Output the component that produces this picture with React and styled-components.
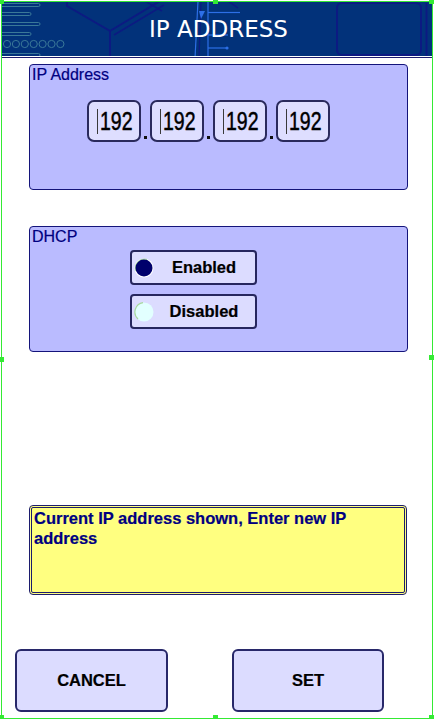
import React from "react";
import styled, { createGlobalStyle } from "styled-components";

const Global = createGlobalStyle`
  html, body { margin: 0; padding: 0; background: #ffffff; }
  body { font-family: "Liberation Sans", Arial, sans-serif; }
  * { box-sizing: border-box; }
`;

const Frame = styled.div`
  position: relative;
  margin: 1px 0 0 1px;
  width: 432px;
  height: 718px;
  border: 1px solid #34ea34;
  display: flex;
  flex-direction: column;
  background: #ffffff;
`;

const Handle = styled.span`
  position: absolute;
  width: 5px;
  height: 5px;
  background: #34ea34;
  left: ${(p) => p.$x};
  top: ${(p) => p.$y};
  z-index: 5;
`;

const Header = styled.header`
  position: relative;
  height: 55px;
  background: #02327a;
  border-bottom: 1px solid #ffffff;
  box-shadow: 0 1px 0 #1c1c6e;
  display: flex;
  align-items: center;
  justify-content: center;
  overflow: hidden;
`;

const HeaderArt = styled.svg`
  position: absolute;
  left: 0;
  top: 0;
  width: 430px;
  height: 54px;
`;

const Title = styled.h1`
  position: relative;
  margin: 0 0 1px 3px;
  font-family: "DejaVu Sans", Verdana, sans-serif;
  font-weight: normal;
  font-size: 23px;
  color: #ffffff;
`;

const Panel = styled.section`
  margin: ${(p) => p.$top}px 0 0 27px;
  width: 379px;
  height: 126px;
  border: 1px solid #14147a;
  border-radius: 4px;
  background: #babbff;
  padding: 1px 3px 0 2px;
  display: flex;
  flex-direction: column;
`;

const PanelLabel = styled.div`
  font-size: 16px;
  line-height: 17px;
  color: #000080;
  -webkit-text-stroke: 0.2px #000080;
`;

const IpRow = styled.div`
  display: flex;
  align-items: flex-end;
  margin: 17px 0 0 55px;
`;

const OctetBox = styled.div`
  width: 54px;
  height: 42px;
  border: 2px solid #2a2a5c;
  border-radius: 7px;
  background: #dedeff;
  display: flex;
  align-items: center;
  padding-left: 8px;
  overflow: visible;
`;

const Caret = styled.span`
  width: 1px;
  height: 25px;
  background: #3a3a3a;
  flex: none;
`;

const Digits = styled.span`
  display: inline-block;
  margin-left: 2px;
  font-size: 26px;
  line-height: 26px;
  color: #000000;
  -webkit-text-stroke: 0.5px #000000;
  transform: scaleX(0.75);
  transform-origin: left center;
  width: 32px;
  white-space: nowrap;
`;

const Sep = styled.div`
  width: 9px;
  height: 42px;
  display: flex;
  justify-content: center;
  align-items: flex-end;
  padding-bottom: 3px;
`;

const Dot = styled.span`
  width: 3px;
  height: 3px;
  background: #101010;
`;

const RadioList = styled.div`
  display: flex;
  flex-direction: column;
  gap: 9px;
  margin: 5px 0 0 98px;
`;

const RadioButton = styled.button`
  width: 127px;
  height: 35px;
  border: 2px solid #26265e;
  border-radius: 4px;
  background: #dcdcff;
  display: flex;
  align-items: center;
  padding: 0 0 0 1px;
  font-family: "Liberation Sans", Arial, sans-serif;
  cursor: pointer;
`;

const RadioLabel = styled.span`
  flex: 1;
  text-align: center;
  font-weight: bold;
  font-size: 16.5px;
  color: #000000;
  padding-right: 2px;
  -webkit-text-stroke: 0.2px #000000;
`;

const Message = styled.div`
  margin: 153px 0 0 27px;
  width: 378px;
  height: 90px;
  border: 3px double #1c1c6e;
  border-radius: 4px;
  background: #ffff80;
  padding: 0 4px 0 2px;
  color: #000080;
  font-weight: bold;
  font-size: 16.5px;
  line-height: 20px;
  -webkit-text-stroke: 0.2px #000080;
`;

const ActionRow = styled.div`
  display: flex;
  margin: 54px 0 0 13px;
  gap: 64px;
`;

const ActionButton = styled.button`
  width: ${(p) => p.$w}px;
  height: 63px;
  border: 2px solid #28286a;
  border-radius: 6px;
  background: #dcdcff;
  font-family: "Liberation Sans", Arial, sans-serif;
  font-weight: bold;
  font-size: 16.5px;
  color: #000000;
  -webkit-text-stroke: 0.2px #000000;
  cursor: pointer;
  padding: 0;
`;

function RadioDot({ on }) {
  return (
    <svg width="22" height="22" viewBox="0 0 22 22" style={{ flex: "none" }}>
      {on ? (
        <>
          <circle cx="11" cy="11" r="9.5" fill="#ffffff" />
          <path d="M3 14 A9 9 0 0 1 14 2.5" fill="none" stroke="#a8d8a0" strokeWidth="1.2" />
          <circle cx="11" cy="11" r="8.5" fill="#00006c" />
        </>
      ) : (
        <>
          <circle cx="11" cy="11" r="9.5" fill="#e2ffff" />
          <path d="M5 18 A9.5 9.5 0 0 1 10 1.6" fill="none" stroke="#a8d8a0" strokeWidth="1.2" />
        </>
      )}
    </svg>
  );
}

function Art() {
  const teal = "#3a7898";
  const navy = "#0c1a82";
  const blue = "#2d6fe6";
  const bars = [
    [1, 38],
    [10, 29],
    [20, 38],
    [30, 29],
    [51, 38],
  ];
  return (
    <HeaderArt viewBox="0 0 430 54">
      {bars.map(([y, w], i) => (
        <rect key={i} x="-4" y={y + 0.5} width={w + 4} height="3" rx="1.5" fill="none" stroke={teal} strokeWidth="1" />
      ))}
      {[0, 1, 2, 3, 4, 5, 6].map((i) => (
        <circle key={i} cx={5 + i * 8.9} cy="42" r="3.6" fill="none" stroke={teal} strokeWidth="1" />
      ))}
      <polyline points="65,-1 65,4 108,29 108,56" fill="none" stroke={navy} strokeWidth="2" />
      <line x1="108" y1="29" x2="158" y2="-1" stroke={navy} strokeWidth="2" />
      <line x1="112" y1="33" x2="162" y2="3" stroke={navy} strokeWidth="1.5" />
      <line x1="143" y1="-1" x2="160" y2="9" stroke={navy} strokeWidth="1.5" />
      <line x1="226" y1="-1" x2="236" y2="6" stroke={navy} strokeWidth="1.5" />
      <line x1="196" y1="-1" x2="193" y2="56" stroke={blue} strokeWidth="1.2" />
      <line x1="199" y1="-1" x2="197" y2="56" stroke={navy} strokeWidth="1.2" />
      <polygon points="197,9 203,9 199,17" fill={blue} />
      <line x1="206" y1="-1" x2="206" y2="56" stroke={blue} strokeWidth="1.2" />
      <line x1="206" y1="10.5" x2="238" y2="10.5" stroke={blue} strokeWidth="1.2" />
      <line x1="206" y1="33" x2="226" y2="33" stroke={blue} strokeWidth="1.2" />
      <line x1="206" y1="46" x2="224" y2="46" stroke={blue} strokeWidth="1.2" />
      <circle cx="225" cy="46" r="1.6" fill={blue} />
      <rect x="335" y="1" width="84" height="52" rx="5" fill="none" stroke={navy} strokeWidth="2" />
      <line x1="424.5" y1="1" x2="424.5" y2="56" stroke={navy} strokeWidth="2" />
    </HeaderArt>
  );
}

function Octet({ value }) {
  return (
    <OctetBox>
      <Caret />
      <Digits>{value}</Digits>
    </OctetBox>
  );
}

export default function App() {
  const octets = ["192", "192", "192", "192"];
  return (
    <>
      <Global />
      <Frame>
        <Handle $x="-3px" $y="-3px" />
        <Handle $x="211px" $y="-3px" />
        <Handle $x="427px" $y="-3px" />
        <Handle $x="-3px" $y="355px" />
        <Handle $x="427px" $y="353px" />
        <Handle $x="-3px" $y="713px" />
        <Handle $x="211px" $y="713px" />
        <Handle $x="427px" $y="713px" />
        <Header>
          <Art />
          <Title>IP ADDRESS</Title>
        </Header>
        <Panel $top={7}>
          <PanelLabel>IP Address</PanelLabel>
          <IpRow>
            {octets.map((o, i) => (
              <React.Fragment key={i}>
                {i > 0 && (
                  <Sep>
                    <Dot />
                  </Sep>
                )}
                <Octet value={o} />
              </React.Fragment>
            ))}
          </IpRow>
        </Panel>
        <Panel $top={36}>
          <PanelLabel>DHCP</PanelLabel>
          <RadioList>
            <RadioButton>
              <RadioDot on />
              <RadioLabel>Enabled</RadioLabel>
            </RadioButton>
            <RadioButton>
              <RadioDot />
              <RadioLabel>Disabled</RadioLabel>
            </RadioButton>
          </RadioList>
        </Panel>
        <Message>Current IP address shown, Enter new IP address</Message>
        <ActionRow>
          <ActionButton $w={153}>CANCEL</ActionButton>
          <ActionButton $w={152}>SET</ActionButton>
        </ActionRow>
      </Frame>
    </>
  );
}
